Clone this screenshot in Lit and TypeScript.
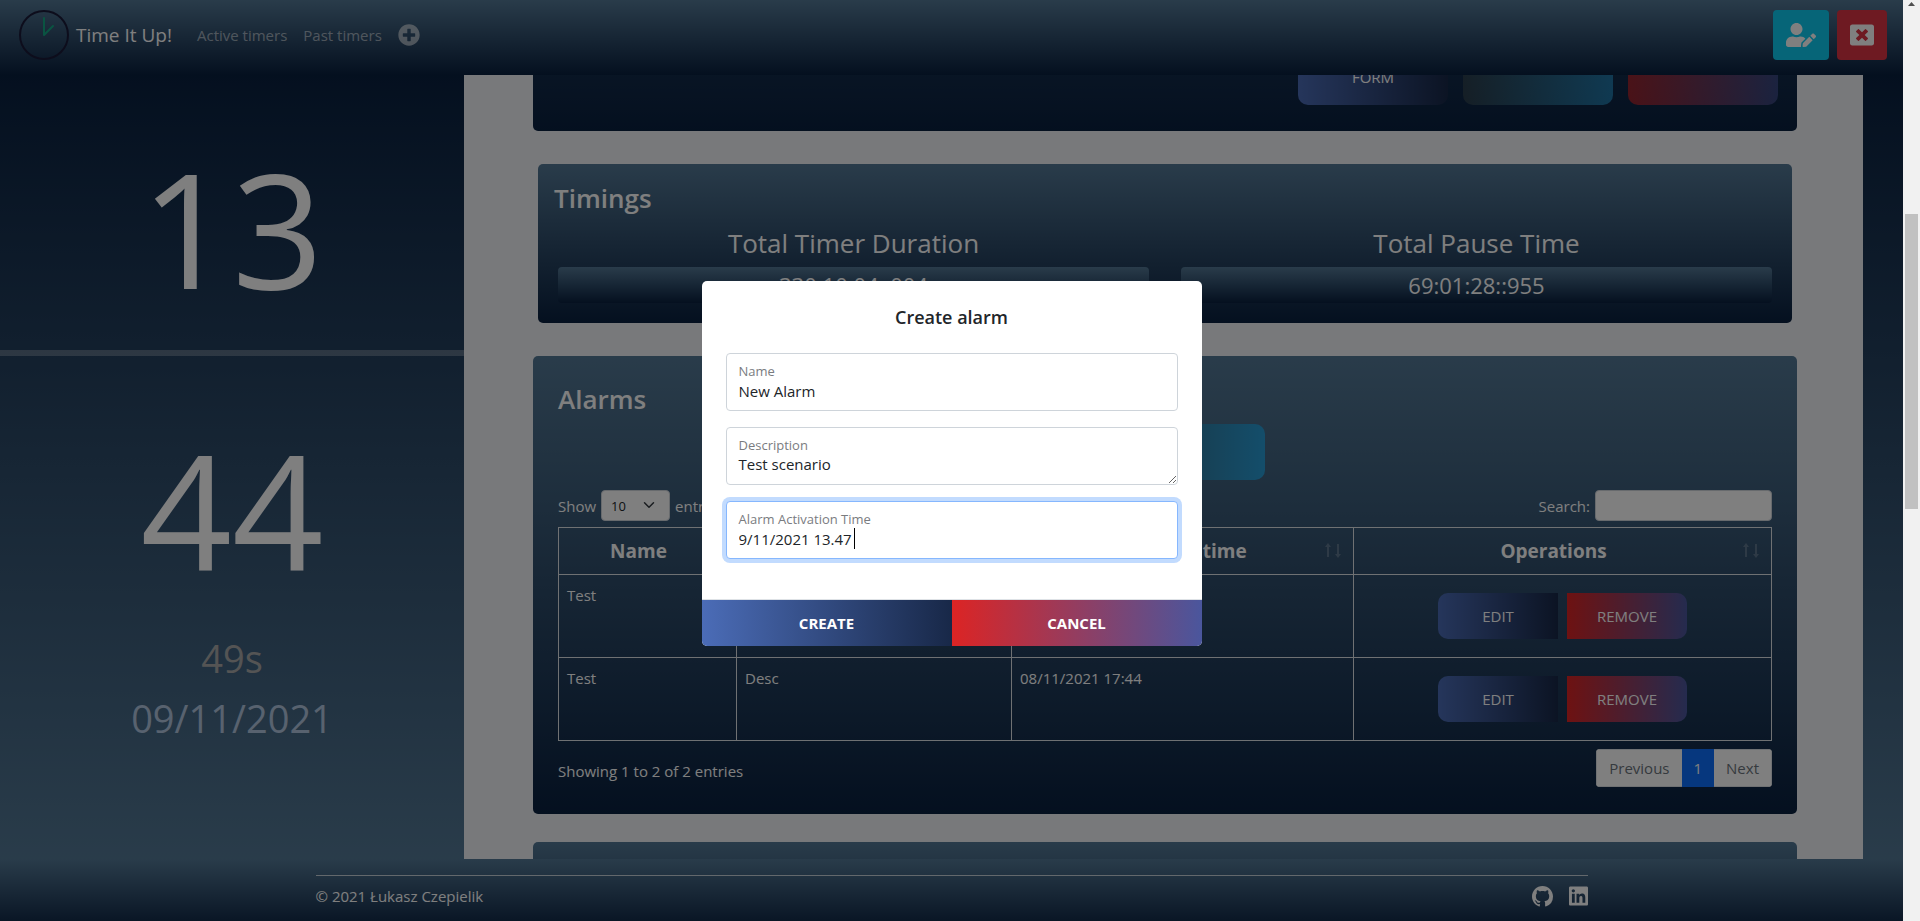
import { LitElement, html, css, svg } from "lit";
import { customElement, property } from "lit/decorators.js";

const icons = {
  userEdit: svg`<path d="M224 256c70.7 0 128-57.3 128-128S294.7 0 224 0 96 57.3 96 128s57.3 128 128 128zm89.6 32h-16.7c-22.2 10.2-46.9 16-72.9 16s-50.6-5.8-72.9-16h-16.7C60.2 288 0 348.2 0 422.4V464c0 26.5 21.5 48 48 48h274.9c-2.4-6.8-3.4-14-2.6-21.3l6.8-60.9 1.2-11.1 7.9-7.9 77.3-77.3c-24.5-27.7-60-45.5-99.9-45.5zm45.3 145.3l-6.8 61c-1.1 10.2 7.5 18.8 17.6 17.6l60.9-6.8 137.9-137.9-71.7-71.7-137.9 137.8zM633 268.9L595.1 231c-9.3-9.3-24.5-9.3-33.8 0l-37.8 37.8-4.1 4.1 71.8 71.7 41.8-41.8c9.3-9.4 9.3-24.5 0-33.9z"/>`,
  windowClose: svg`<path d="M464 32H48C21.5 32 0 53.5 0 80v352c0 26.5 21.5 48 48 48h416c26.5 0 48-21.5 48-48V80c0-26.5-21.5-48-48-48zm-83.6 290.5c4.8 4.8 4.8 12.6 0 17.4l-40.5 40.5c-4.8 4.8-12.6 4.8-17.4 0L256 313.3l-66.5 67.1c-4.8 4.8-12.6 4.8-17.4 0l-40.5-40.5c-4.8-4.8-4.8-12.6 0-17.4l67.1-66.5-67.1-66.5c-4.8-4.8-4.8-12.6 0-17.4l40.5-40.5c4.8-4.8 12.6-4.8 17.4 0l66.5 67.1 66.5-67.1c4.8-4.8 12.6-4.8 17.4 0l40.5 40.5c4.8 4.8 4.8 12.6 0 17.4L313.3 256l67.1 66.5z"/>`,
  plus: svg`<path d="M256 8C119 8 8 119 8 256s111 248 248 248 248-111 248-248S393 8 256 8zm144 276c0 6.6-5.4 12-12 12h-92v92c0 6.6-5.4 12-12 12h-56c-6.6 0-12-5.4-12-12v-92h-92c-6.6 0-12-5.4-12-12v-56c0-6.6 5.4-12 12-12h92v-92c0-6.6 5.4-12 12-12h56c6.6 0 12 5.4 12 12v92h92c6.6 0 12 5.4 12 12v56z"/>`,
  github: svg`<path d="M8 0C3.58 0 0 3.58 0 8c0 3.54 2.29 6.53 5.47 7.59.4.07.55-.17.55-.38 0-.19-.01-.82-.01-1.49-2.01.37-2.53-.49-2.69-.94-.09-.23-.48-.94-.82-1.13-.28-.15-.68-.52-.01-.53.63-.01 1.08.58 1.23.82.72 1.21 1.87.87 2.33.66.07-.52.28-.87.51-1.07-1.78-.2-3.64-.89-3.64-3.95 0-.87.31-1.59.82-2.15-.08-.2-.36-1.02.08-2.12 0 0 .67-.21 2.2.82.64-.18 1.32-.27 2-.27.68 0 1.36.09 2 .27 1.53-1.04 2.2-.82 2.2-.82.44 1.1.16 1.92.08 2.12.51.56.82 1.27.82 2.15 0 3.07-1.87 3.75-3.65 3.95.29.25.54.73.54 1.48 0 1.07-.01 1.93-.01 2.2 0 .21.15.46.55.38A8.012 8.012 0 0 0 16 8c0-4.42-3.58-8-8-8z"/>`,
  linkedin: svg`<path d="M416 32H31.9C14.3 32 0 46.5 0 64.3v383.4C0 465.5 14.3 480 31.9 480H416c17.6 0 32-14.5 32-32.3V64.3c0-17.8-14.4-32.3-32-32.3zM135.4 416H69V202.2h66.5V416zm-33.2-243c-21.3 0-38.5-17.3-38.5-38.5S80.9 96 102.2 96c21.2 0 38.5 17.3 38.5 38.5 0 21.3-17.2 38.5-38.5 38.5zm282.1 243h-66.4V312c0-24.8-.5-56.7-34.5-56.7-34.6 0-39.9 27-39.9 54.9V416h-66.4V202.2h63.7v29.2h.9c8.9-16.8 30.6-34.5 62.9-34.5 67.2 0 79.7 44.3 79.7 101.9V416z"/>`,
};

const shared = css`
  *,
  *::before,
  *::after {
    box-sizing: border-box;
  }
  h1,
  h2,
  h3,
  p {
    margin: 0;
    font-weight: 400;
  }
  a {
    color: inherit;
    text-decoration: none;
  }
  button {
    font: inherit;
    color: inherit;
    border: 0;
    padding: 0;
    cursor: pointer;
  }
  input,
  textarea,
  select {
    font: inherit;
    margin: 0;
  }
  svg {
    display: block;
    fill: currentColor;
  }
  .royal {
    background: linear-gradient(to right, #4b6cb7, #182848);
  }
  .ember {
    background: linear-gradient(to right, #dc2424, #4a569d);
  }
  .lagoon {
    background: linear-gradient(to right, #3a4a50, #289cd6);
  }
`;

@customElement("top-bar")
export class TopBar extends LitElement {
  static styles = [
    shared,
    css`
      :host {
        display: flex;
        align-items: center;
        padding: 10px 16px 15px 19px;
        background: linear-gradient(to top, #09203f, #537895);
      }
      .brand {
        display: flex;
        align-items: center;
        gap: 7px;
        margin-right: 25px;
        font-size: 19px;
        line-height: 30px;
        color: #fff;
      }
      .links {
        display: flex;
        align-items: center;
        gap: 16px;
        margin-right: auto;
        color: rgba(255, 255, 255, 0.55);
      }
      .actions {
        display: flex;
        gap: 8px;
      }
      .square {
        display: grid;
        place-items: center;
        height: 50px;
        padding: 0 13px;
        border-radius: 4px;
        color: #fff;
      }
      .info {
        background: #0dcaf0;
      }
      .danger {
        background: #dc3545;
      }
    `,
  ];

  render() {
    return html`
      <a class="brand" href="#">
        <svg width="50" height="50" viewBox="0 0 50 50" fill="none">
          <circle cx="25" cy="25" r="24" fill="none" stroke="#1a1a38" stroke-width="2" />
          <path d="M25 8V25L34 16" fill="none" stroke="#14a884" stroke-width="2" stroke-linecap="round" stroke-linejoin="round" />
        </svg>
        Time It Up!
      </a>
      <nav class="links">
        <a href="#active">Active timers</a>
        <a href="#past">Past timers</a>
        <a href="#new" aria-label="New timer">
          <svg width="22" height="22" viewBox="0 0 512 512">${icons.plus}</svg>
        </a>
      </nav>
      <div class="actions">
        <button class="square info" aria-label="Edit profile">
          <svg width="30" height="24" viewBox="0 0 640 512">${icons.userEdit}</svg>
        </button>
        <button class="square danger" aria-label="Log out">
          <svg width="24" height="24" viewBox="0 0 512 512">${icons.windowClose}</svg>
        </button>
      </div>
    `;
  }
}

@customElement("side-clock")
export class SideClock extends LitElement {
  @property() hours = "13";
  @property() minutes = "44";
  @property() seconds = "49s";
  @property() date = "09/11/2021";

  static styles = [
    shared,
    css`
      :host {
        display: block;
        text-align: center;
        color: #fff;
      }
      .digits {
        padding-top: 52px;
        font-size: 160px;
        line-height: 200px;
      }
      .hours {
        padding-bottom: 23px;
        border-bottom: 6px solid rgba(255, 255, 255, 0.25);
      }
      .seconds,
      .date {
        font-size: 38px;
        line-height: 48px;
      }
      .seconds {
        margin-top: 26px;
        color: darkgray;
      }
      .date {
        margin-top: 12px;
        color: lightsteelblue;
      }
    `,
  ];

  render() {
    return html`
      <div class="digits hours">${this.hours}</div>
      <div class="digits">${this.minutes}</div>
      <div class="seconds">${this.seconds}</div>
      <div class="date">${this.date}</div>
    `;
  }
}

interface Alarm {
  name: string;
  description: string;
  time: string;
}

@customElement("timer-details")
export class TimerDetails extends LitElement {
  @property({ attribute: false }) alarms: Alarm[] = [
    { name: "Test", description: "Desc", time: "08/11/2021 17:44" },
    { name: "Test", description: "Desc", time: "08/11/2021 17:44" },
  ];

  static styles = [
    shared,
    css`
      :host {
        display: block;
        overflow: hidden;
        background: #f0f2f6;
        color: #fff;
      }
      /* scrolled so that only the foot of the first card shows */
      .cards {
        display: flex;
        flex-direction: column;
        margin-top: -444px;
        padding: 0 66px 0 69px;
      }
      .card {
        border-radius: 5px;
        background: linear-gradient(to top, #09203f, #537895);
      }
      .summary {
        display: flex;
        justify-content: flex-end;
        align-items: flex-end;
        gap: 15px;
        min-height: 500px;
        padding: 26px 19px;
        margin-bottom: 33px;
      }
      .wide {
        width: 150px;
        min-height: 80px;
        padding: 40px 0 16px;
        border-radius: 10px;
        line-height: 24px;
      }
      .wide:disabled {
        opacity: 0.65;
      }
      .title {
        font-size: 26px;
        line-height: 36px;
        font-weight: 600;
      }
      .timings {
        margin: 0 5px 33px;
        padding: 16px 16px 20px;
      }
      .pair {
        display: grid;
        grid-template-columns: 1fr 1fr;
        gap: 32px;
        padding: 10px 4px 0;
        text-align: center;
      }
      .pair h3 {
        margin-bottom: 7px;
        font-size: 26px;
        line-height: 34px;
      }
      .time {
        border-radius: 4px;
        background: linear-gradient(to top, #09203f, #537895);
        font-size: 22px;
        line-height: 36px;
      }
      .alarms {
        padding: 25px 25px 27px;
        margin-bottom: 28px;
      }
      .create {
        display: block;
        width: 200px;
        height: 56px;
        margin: 7px auto 10px;
        border-radius: 10px;
      }
      .tools,
      .foot {
        display: flex;
        justify-content: space-between;
      }
      .tools {
        align-items: center;
        margin-bottom: 6px;
      }
      .tools label {
        display: flex;
        align-items: center;
        gap: 5px;
      }
      .pick {
        position: relative;
      }
      .pick select {
        display: block;
        width: 69px;
        height: 31px;
        padding: 0 9px;
        border: 1px solid #ced4da;
        border-radius: 4px;
        background: #fff;
        color: #212529;
        font-size: 13px;
        appearance: none;
      }
      .pick svg {
        position: absolute;
        right: 15px;
        top: 9px;
        color: #343a40;
        pointer-events: none;
      }
      .tools input {
        width: 177px;
        height: 31px;
        padding: 0 8px;
        border: 1px solid #ced4da;
        border-radius: 4px;
        background: #fff;
      }
      table {
        width: 100%;
        table-layout: fixed;
        border-collapse: collapse;
      }
      th,
      td {
        border: 1px solid #dee2e6;
        padding: 8px;
        vertical-align: top;
        text-align: left;
      }
      .c1 {
        width: 178px;
      }
      .c2 {
        width: 275px;
      }
      .c3 {
        width: 342px;
      }
      th {
        height: 47px;
        padding: 8px 26px 8px 8px;
        font-size: 19px;
        line-height: 30px;
        font-weight: 700;
        text-align: center;
        position: relative;
      }
      th svg {
        position: absolute;
        right: 12px;
        top: 15px;
        opacity: 0.2;
      }
      .ops {
        display: flex;
        justify-content: center;
        gap: 9px;
        padding: 10px 0;
      }
      .ops button {
        width: 120px;
        height: 46px;
        border-radius: 10px 0 0 10px;
      }
      .ops button + button {
        border-radius: 0 10px 10px 0;
      }
      .foot {
        align-items: flex-start;
        margin-top: 8px;
      }
      .foot p {
        padding-top: 10px;
      }
      .pages {
        display: flex;
        border-radius: 4px;
        overflow: hidden;
        background: #fff;
        color: #6c757d;
      }
      .pages a {
        padding: 6px 12px;
        border: 1px solid #dee2e6;
        border-width: 1px 0;
      }
      .pages a:first-child {
        border-left-width: 1px;
      }
      .pages a:last-child {
        border-right-width: 1px;
      }
      .pages .current {
        background: #0d6efd;
        border-color: #0d6efd;
        color: #fff;
      }
      .next {
        height: 120px;
      }
    `,
  ];

  private heading(text: string) {
    return html`<th scope="col">
      ${text}
      <svg width="16" height="15" viewBox="0 0 16 15">
        <path d="M3 14V3M13 1v11" fill="none" stroke="currentColor" stroke-width="2" />
        <path d="M3 0l3 4H0zM13 15l3-4h-6z" />
      </svg>
    </th>`;
  }

  render() {
    return html`
      <div class="cards">
        <section class="card summary">
          <button class="wide royal">FORM</button>
          <button class="wide lagoon" disabled></button>
          <button class="wide ember" disabled></button>
        </section>

        <section class="card timings">
          <h2 class="title">Timings</h2>
          <div class="pair">
            <div>
              <h3>Total Timer Duration</h3>
              <div class="time">330:10:04::004</div>
            </div>
            <div>
              <h3>Total Pause Time</h3>
              <div class="time">69:01:28::955</div>
            </div>
          </div>
        </section>

        <section class="card alarms">
          <h2 class="title">Alarms</h2>
          <button class="create lagoon">CREATE</button>
          <div class="tools">
            <label>
              Show
              <span class="pick">
                <select>
                  <option>10</option>
                  <option>25</option>
                  <option>50</option>
                </select>
                <svg width="12" height="12" viewBox="0 0 16 16">
                  <path d="M2 5l6 6 6-6" fill="none" stroke="currentColor" stroke-width="2" stroke-linecap="round" stroke-linejoin="round" />
                </svg>
              </span>
              entries
            </label>
            <label>Search: <input type="search" /></label>
          </div>
          <table>
            <colgroup>
              <col class="c1" />
              <col class="c2" />
              <col class="c3" />
              <col />
            </colgroup>
            <thead>
              <tr>
                ${["Name", "Description", "Activation time", "Operations"].map((t) => this.heading(t))}
              </tr>
            </thead>
            <tbody>
              ${this.alarms.map(
                (a) => html`<tr>
                  <td>${a.name}</td>
                  <td>${a.description}</td>
                  <td>${a.time}</td>
                  <td>
                    <div class="ops">
                      <button class="royal">EDIT</button>
                      <button class="ember">REMOVE</button>
                    </div>
                  </td>
                </tr>`
              )}
            </tbody>
          </table>
          <div class="foot">
            <p>Showing 1 to 2 of 2 entries</p>
            <nav class="pages" aria-label="Alarm pages">
              <a href="#prev">Previous</a>
              <a class="current" href="#1">1</a>
              <a href="#next">Next</a>
            </nav>
          </div>
        </section>

        <section class="card next"></section>
      </div>
    `;
  }
}

@customElement("page-footer")
export class PageFooter extends LitElement {
  static styles = [
    shared,
    css`
      :host {
        display: block;
        padding: 16px 24px 13px;
        background: linear-gradient(to bottom, #537895, #09203f 72px);
        color: #fff;
      }
      .inner {
        display: flex;
        justify-content: space-between;
        align-items: center;
        max-width: 1272px;
        margin: 0 auto;
        padding-top: 8px;
        border-top: 1px solid rgba(255, 255, 255, 0.7);
      }
      .social {
        display: flex;
        align-items: center;
        gap: 16px;
      }
    `,
  ];

  render() {
    return html`
      <div class="inner">
        <span>© 2021 Łukasz Czepielik</span>
        <div class="social">
          <a href="#github" aria-label="GitHub">
            <svg width="21" height="21" viewBox="0 0 16 16">${icons.github}</svg>
          </a>
          <a href="#linkedin" aria-label="LinkedIn">
            <svg width="19" height="22" viewBox="0 0 448 512">${icons.linkedin}</svg>
          </a>
        </div>
      </div>
    `;
  }
}

@customElement("alarm-dialog")
export class AlarmDialog extends LitElement {
  static styles = [
    shared,
    css`
      :host {
        position: absolute;
        inset: 0;
        display: flex;
        align-items: center;
        justify-content: center;
        padding-top: 6px;
        background: rgba(0, 0, 0, 0.5);
      }
      .dialog {
        width: 500px;
        max-width: 100%;
        overflow: hidden;
        border-radius: 5px;
        background: #fff;
        color: #212529;
      }
      .body {
        display: flex;
        flex-direction: column;
        gap: 16px;
        padding: 21px 24px 40px;
      }
      h2 {
        margin-bottom: 5px;
        font-size: 18px;
        line-height: 30px;
        font-weight: 600;
        text-align: center;
      }
      .field {
        position: relative;
      }
      .field label {
        position: absolute;
        left: 13px;
        top: 8px;
        font-size: 13px;
        line-height: 20px;
        color: #7a7c7f;
      }
      .field input,
      .field textarea {
        display: block;
        width: 100%;
        height: 58px;
        padding: 25px 12px 7px;
        border: 1px solid #ced4da;
        border-radius: 4px;
        background: #fff;
        color: #212529;
        line-height: 24px;
        outline: 0;
      }
      .field textarea {
        padding: 24px 12px 0;
        resize: vertical;
        overflow: hidden;
      }
      .field .active {
        border-color: #86b7fe;
        box-shadow: 0 0 0 4px #c2dbfe;
      }
      .caret {
        position: absolute;
        left: 128px;
        top: 27px;
        width: 1px;
        height: 21px;
        background: #000;
        pointer-events: none;
      }
      .buttons {
        display: grid;
        grid-template-columns: 1fr 1fr;
        border-top: 1px solid #dee2e6;
      }
      .buttons button {
        height: 46px;
        color: #fff;
        font-weight: 700;
      }
    `,
  ];

  render() {
    return html`
      <form class="dialog" role="dialog" aria-labelledby="heading">
        <div class="body">
          <h2 id="heading">Create alarm</h2>
          <div class="field">
            <input id="name" type="text" .value=${"New Alarm"} />
            <label for="name">Name</label>
          </div>
          <div class="field">
            <textarea id="description" .value=${"Test scenario"}></textarea>
            <label for="description">Description</label>
          </div>
          <div class="field">
            <input id="time" class="active" type="text" .value=${"9/11/2021 13.47"} />
            <label for="time">Alarm Activation Time</label>
            <span class="caret" aria-hidden="true"></span>
          </div>
        </div>
        <div class="buttons">
          <button class="royal" type="button">CREATE</button>
          <button class="ember" type="button">CANCEL</button>
        </div>
      </form>
    `;
  }
}

@customElement("app-root")
export class AppRoot extends LitElement {
  static styles = [
    shared,
    css`
      :host {
        display: grid;
        grid-template-columns: 1fr 17px;
        height: 100vh;
        overflow: hidden;
        font: 15px/24px "Open Sans", "Noto Sans", sans-serif;
      }
      .page {
        position: relative;
        display: flex;
        flex-direction: column;
        min-height: 0;
      }
      .main {
        flex: 1;
        min-height: 0;
        display: grid;
        grid-template-columns: 464px 1fr;
        padding-right: 40px;
        overflow: hidden;
        background: linear-gradient(to bottom, #09203f, #537895);
      }
      .main > * {
        min-height: 0;
      }
      .scrollbar {
        display: flex;
        flex-direction: column;
        align-items: center;
        background: #f1f1f1;
        color: #505050;
      }
      .scrollbar svg {
        margin-top: 2px;
      }
      .thumb {
        width: 13px;
        height: 32%;
        margin-top: 208px;
        background: #c1c1c1;
      }
    `,
  ];

  render() {
    return html`
      <div class="page">
        <top-bar></top-bar>
        <div class="main">
          <side-clock></side-clock>
          <timer-details></timer-details>
        </div>
        <page-footer></page-footer>
        <alarm-dialog></alarm-dialog>
      </div>
      <div class="scrollbar" aria-hidden="true">
        <svg width="7" height="4" viewBox="0 0 7 4"><path d="M3.5 0L7 4H0z" /></svg>
        <div class="thumb"></div>
      </div>
    `;
  }
}
